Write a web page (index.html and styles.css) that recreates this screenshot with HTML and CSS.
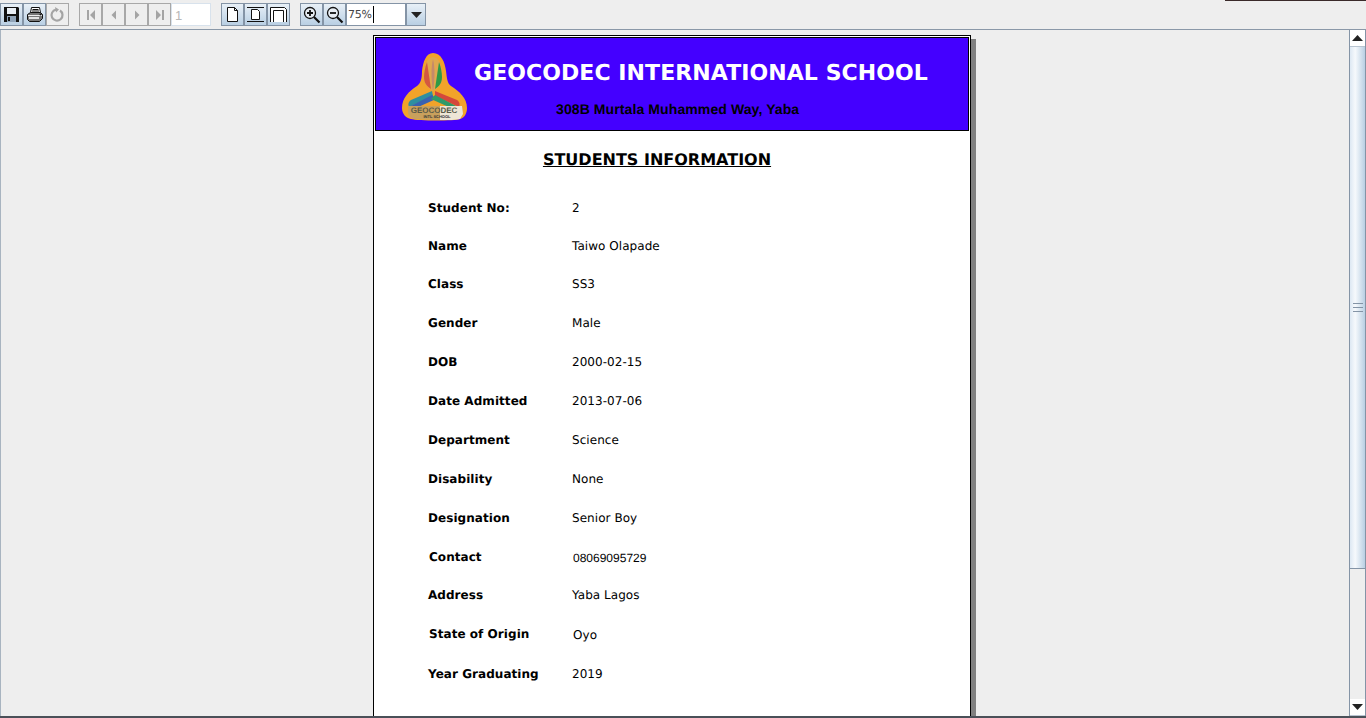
FILE: index.html
```html
<!DOCTYPE html>
<html>
<head>
    <title>Students Information</title>
    <link rel="stylesheet" href="styles.css">
</head>
<body>
    <div class="topline"></div>
    <div class="toolbar">
        <div class="group">
            <button class="tool">
                <svg width="17" height="17" viewBox="0 0 17 17"><path d="M1 1h14l1 1v14H1z" fill="#111"/><rect x="4" y="2" width="9" height="6" fill="#e8eef4"/><rect x="4" y="10" width="9" height="6" fill="#8fa3b8"/><rect x="5" y="11" width="2" height="4" fill="#111"/></svg>
            </button>
            <button class="tool">
                <svg width="18" height="17" viewBox="0 0 18 17"><path d="M5.500 1.500h8l1 5h-10z" fill="#fff" stroke="#111"/><path d="M6.500 3.500h6M6 5h7" stroke="#111"/><path d="M1.500 8.500l3-2h10l2 2v4l-3 3h-10l-2-2z" fill="#777" stroke="#111"/><path d="M2 9.500h14" stroke="#eee"/><path d="M3 11h10v2H3z" fill="#e4e4e4"/><circle cx="14.500" cy="8.500" r="1" fill="#111"/></svg>
            </button>
            <button class="tool off">
                <svg width="17" height="17" viewBox="0 0 17 17"><path d="M11 4.500a5.500 5.500 0 1 1-4-.8" fill="none" stroke="#a4a4a4" stroke-width="2.200"/><path d="M6 1l4 2.500-3 3z" fill="#a4a4a4"/></svg>
            </button>
        </div>
        <div class="group gap">
            <button class="tool off">
                <svg width="12" height="12" viewBox="0 0 12 12"><path d="M2 1h2v10H2zM10 1v10L5 6z" fill="#a4a4a4"/></svg>
            </button>
            <button class="tool off">
                <svg width="12" height="12" viewBox="0 0 12 12"><path d="M8 1.500v9L3.500 6z" fill="#a4a4a4"/></svg>
            </button>
            <button class="tool off">
                <svg width="12" height="12" viewBox="0 0 12 12"><path d="M4 1.500v9L8.500 6z" fill="#a4a4a4"/></svg>
            </button>
            <button class="tool off">
                <svg width="12" height="12" viewBox="0 0 12 12"><path d="M2 1v10l5-5zM8 1h2v10H8z" fill="#a4a4a4"/></svg>
            </button>
            <div class="pagebox">1</div>
        </div>
        <div class="group gap">
            <button class="tool">
                <svg width="15" height="17" viewBox="0 0 15 17"><path d="M2.500 1.500h7l3 3v11h-10z" fill="#fff" stroke="#111"/><path d="M9.500 1.500v3h3" fill="none" stroke="#111"/></svg>
            </button>
            <button class="tool">
                <svg width="19" height="17" viewBox="0 0 19 17"><path d="M1 1.500h17M1 15.500h17" stroke="#111"/><path d="M5.500 3.500h6l2 2v8h-8z" fill="#fff" stroke="#111"/></svg>
            </button>
            <button class="tool">
                <svg width="19" height="17" viewBox="0 0 19 17"><path d="M1.500 16V1.500h14l2 2V16" fill="#fff" stroke="#111"/><path d="M4.500 16V4.500h10V16" fill="none" stroke="#111"/></svg>
            </button>
        </div>
        <div class="group gap">
            <button class="tool">
                <svg width="18" height="18" viewBox="0 0 18 18"><circle cx="7" cy="7" r="5.500" fill="#e8eef4" stroke="#111" stroke-width="1.300"/><path d="M4 7h6M7 4v6" stroke="#111" stroke-width="1.800"/><path d="M11 11l5.500 5.500" stroke="#111" stroke-width="2.200"/></svg>
            </button>
            <button class="tool">
                <svg width="18" height="18" viewBox="0 0 18 18"><circle cx="7" cy="7" r="5.500" fill="#e8eef4" stroke="#111" stroke-width="1.300"/><path d="M4 7h6" stroke="#111" stroke-width="1.800"/><path d="M11 11l5.500 5.500" stroke="#111" stroke-width="2.200"/></svg>
            </button>
            <div class="zoombox">75%<span class="caret"></span></div>
            <button class="tool drop">
                <svg width="11" height="6" viewBox="0 0 11 6"><path d="M0 0h11L5.500 6z" fill="#222"/></svg>
            </button>
        </div>
    </div>

    <div class="viewer">
        <div class="canvas">
            <div class="page">
                <div class="banner">
                    <svg class="logo" width="66" height="70" viewBox="0 0 66 70">
                        <path d="M31 0c8 0 12 9 13 18 1 7 1 12 5 15 8 5 16 12 16 22 0 6-3 10-7 11-5 2-42 2-49 0-5-1-9-5-9-11 0-10 7-17 15-22 4-3 5-8 5-15C21 9 24 0 31 0z" fill="#f2a32a"/>
                        <path d="M31 4c6 0 9 9 9 19 0 6-1 10-9 15-8-5-9-9-9-15 0-10 3-19 9-19z" fill="#e0a84e"/>
                        <path d="M25 9c-2 5-3 11-3 15 0 5 2 9 7 12z" fill="#d4583f"/>
                        <path d="M37 9c2 5 3 11 3 15 0 5-2 9-7 12z" fill="#2f9a46"/>
                        <path d="M31 6c-2 8-2 20 0 32 2-12 2-24 0-32z" fill="#c58a6a"/>
                        <path d="M30 38L9 47c-3 2-3 5-2 7l24-11z" fill="#2f8fa0"/>
                        <path d="M30 42L9 53l5 2 20-9z" fill="#3a62b0"/>
                        <path d="M33 38l22 9c3 2 3 5 2 7L33 43z" fill="#d4483c"/>
                        <path d="M33 42l21 11-5 2-20-9z" fill="#2f9a6a"/>
                        <path d="M6 53h54l1 8-3 5c-5 1-39 1-46 0-4-1-6-4-6-7z" fill="#c9a05c"/>
                        <path d="M38 53h22l1 8-3 5c-3 1-12 1-20 1z" fill="#eee6d6"/>
                        <text class="logo-name" x="32" y="60" text-anchor="middle">GEOCODEC</text>
                        <text class="logo-sub" x="35" y="65" text-anchor="middle">INTL SCHOOL</text>
                    </svg>
                    <div class="banner-text">
                        <div class="school">GEOCODEC INTERNATIONAL SCHOOL</div>
                        <div class="address">308B Murtala Muhammed Way, Yaba</div>
                    </div>
                </div>
                <h1 class="title">STUDENTS INFORMATION</h1>
                <div class="rows">
                    <div class="row tight"><span class="label">Student No:</span><span class="value">2</span></div>
                    <div class="row tight"><span class="label">Name</span><span class="value">Taiwo Olapade</span></div>
                    <div class="row"><span class="label">Class</span><span class="value">SS3</span></div>
                    <div class="row"><span class="label">Gender</span><span class="value">Male</span></div>
                    <div class="row"><span class="label">DOB</span><span class="value">2000-02-15</span></div>
                    <div class="row"><span class="label">Date Admitted</span><span class="value">2013-07-06</span></div>
                    <div class="row"><span class="label">Department</span><span class="value">Science</span></div>
                    <div class="row"><span class="label">Disability</span><span class="value">None</span></div>
                    <div class="row"><span class="label">Designation</span><span class="value">Senior Boy</span></div>
                    <div class="row alt tight"><span class="label">Contact</span><span class="value phone">08069095729</span></div>
                    <div class="row"><span class="label">Address</span><span class="value">Yaba Lagos</span></div>
                    <div class="row alt wide"><span class="label">State of Origin</span><span class="value shifted">Oyo</span></div>
                    <div class="row"><span class="label">Year Graduating</span><span class="value">2019</span></div>
                </div>
            </div>
        </div>
        <div class="scrollbar">
            <div class="arrow"><svg width="11" height="6" viewBox="0 0 11 6"><path d="M0 6h11L5.500 0z" fill="#222"/></svg></div>
            <div class="thumb"><span class="grip"></span></div>
            <div class="track"></div>
            <div class="arrow"><svg width="11" height="6" viewBox="0 0 11 6"><path d="M0 0h11L5.500 6z" fill="#222"/></svg></div>
        </div>
    </div>
    <div class="bottomline"></div>
</body>
</html>
```

FILE: styles.css
```css
html, body {
    margin: 0;
    padding: 0;
    height: 718px;
    overflow: hidden;
}
body {
    font-family: "DejaVu Sans", sans-serif;
    background-color: #eeeeee;
    color: #000;
    display: flex;
    flex-direction: column;
    text-rendering: geometricPrecision;
}
.topline {
    height: 1px;
    flex: none;
    background: linear-gradient(to right, #eeeeee 1225px, #3a2a2a 1225px);
}
.toolbar {
    height: 29px;
    flex: none;
    box-sizing: border-box;
    padding-top: 2px;
    display: flex;
    align-items: flex-start;
    background: #eeeeee;
    border-bottom: 1px solid #8a98a8;
}
.group {
    display: flex;
    height: 23px;
}
.gap {
    margin-left: 10px;
}
.tool {
    width: 23px;
    height: 23px;
    padding: 0;
    margin: 0;
    box-sizing: border-box;
    display: flex;
    align-items: center;
    justify-content: center;
    border: 1px solid #8494a6;
    background: linear-gradient(to bottom, #e8f0f7, #b9cfe3);
}
.tool.off {
    border-color: #a8a8a8;
    background: #eeeeee;
}
.pagebox {
    width: 40px;
    height: 23px;
    box-sizing: border-box;
    border: 1px solid #d8e2ec;
    background: #fff;
    font-family: "Liberation Sans", sans-serif;
    font-size: 13px;
    line-height: 23px;
    padding-left: 3px;
    color: #b8b8b8;
}
.zoombox {
    width: 60px;
    height: 23px;
    box-sizing: border-box;
    border: 1px solid #8494a6;
    background: #fff;
    font-size: 11px;
    line-height: 21px;
    padding-left: 1px;
    color: #444;
    letter-spacing: -0.2px;
    display: flex;
    align-items: center;
}
.caret {
    width: 1px;
    height: 17px;
    margin-left: 1px;
    background: #000;
}
.drop {
    width: 20px;
}
.viewer {
    flex: 1;
    min-height: 0;
    display: flex;
}
.canvas {
    flex: 1;
    min-width: 0;
    overflow: hidden;
    padding: 5px 0 0 372px;
    box-sizing: border-box;
    background: #eeeeee;
    border-left: 1px solid #a8b4c0;
}
.page {
    width: 598px;
    height: 700px;
    box-sizing: border-box;
    background: #fff;
    border: 1px solid #000;
    padding: 1px 1px 0;
    box-shadow: 5px 4px 0 #808080;
}
.banner {
    height: 94px;
    box-sizing: border-box;
    background: #4400ff;
    border: 1px solid #000;
    display: flex;
    align-items: flex-start;
}
.logo {
    flex: none;
    margin: 15px 0 0 26px;
}
.banner-text {
    margin-left: 6px;
}
.logo-name {
    font-family: "Liberation Sans", sans-serif;
    font-size: 8px;
    font-weight: bold;
    fill: #5a5a48;
}
.logo-sub {
    font-family: "Liberation Sans", sans-serif;
    font-size: 4px;
    font-weight: bold;
    fill: #333;
}
.school {
    margin-top: 22px;
    font-size: 22px;
    line-height: 28px;
    font-weight: bold;
    letter-spacing: 0.07px;
    color: #fff;
    white-space: nowrap;
}
.address {
    margin: 13px 0 0 82px;
    font-family: "Liberation Sans", sans-serif;
    font-size: 14px;
    line-height: 16px;
    font-weight: bold;
    letter-spacing: 0.1px;
    white-space: nowrap;
}
.title {
    margin: 19px 0 0;
    width: 564px;
    font-size: 16px;
    line-height: 19px;
    font-weight: bold;
    text-align: center;
    text-decoration: underline;
}
.rows {
    margin: 20px 0 0 53px;
}
.row {
    display: flex;
    height: 39px;
    line-height: 39px;
    white-space: nowrap;
}
.tight {
    margin-bottom: -1px;
}
.wide {
    margin-bottom: 1px;
}
.label {
    width: 144px;
    flex: none;
    font-size: 12px;
    font-weight: bold;
    letter-spacing: 0.05px;
}
.value {
    font-size: 12px;
    letter-spacing: 0.05px;
}
.row.alt .label {
    padding-left: 1px;
}
.phone {
    font-family: "Liberation Sans", sans-serif;
    padding-top: 1px;
    letter-spacing: 0;
}
.shifted {
    padding-top: 1px;
}
.scrollbar {
    width: 17px;
    flex: none;
    box-sizing: border-box;
    border-left: 1px solid #8494a6;
    border-right: 1px solid #8494a6;
    display: flex;
    flex-direction: column;
    background: #eeeeee;
}
.arrow {
    height: 16px;
    flex: none;
    display: flex;
    align-items: center;
    justify-content: center;
    background: #fff;
    border-bottom: 1px solid #b8c4d0;
}
.thumb {
    height: 521px;
    flex: none;
    display: flex;
    align-items: center;
    justify-content: center;
    background: linear-gradient(to right, #dde8f3, #f6f9fc 35%, #b9cfe3);
    border-bottom: 1px solid #8494a6;
}
.grip {
    width: 10px;
    height: 7px;
    border-top: 1px solid #8494a6;
    border-bottom: 1px solid #8494a6;
    background: linear-gradient(to bottom, transparent 3px, #8494a6 3px, #8494a6 4px, transparent 4px);
}
.track {
    flex: 1;
}
.bottomline {
    height: 2px;
    flex: none;
    background: #4a5058;
}
```
